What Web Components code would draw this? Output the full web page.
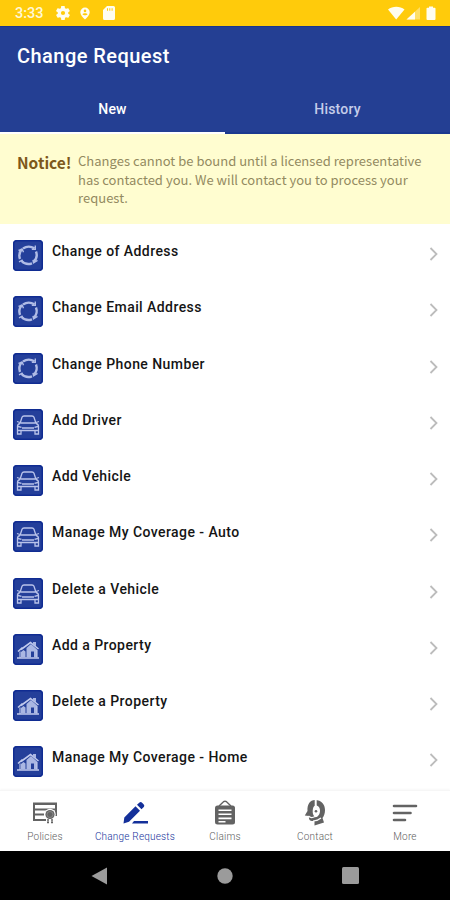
<!DOCTYPE html>
<html lang="en">
<head>
<meta charset="utf-8">
<title>Change Request</title>
<style>
  body {
    margin: 0;
    background: #fff;
    font-family: Roboto, "Liberation Sans", sans-serif;
  }
</style>
</head>
<body>

<template id="statusTemplate">
  <style>
    :host {
      display: flex;
      align-items: center;
      height: 26px;
      padding: 0 13px 0 15px;
      box-sizing: border-box;
      background: #ffcb0b;
      color: #fff8d8;
      font-size: 14.500px;
      font-weight: 500;
    }
    svg { display: block; fill: #fffdf0; }
    .time { width: 41px; padding-top: 1px; }
    .left { display: flex; gap: 10px; flex: 1; align-items: center; }
    .right { display: flex; align-items: center; }
  </style>
  <span class="time"><slot></slot></span>
  <span class="left">
    <svg width="14" height="14" viewBox="2 2 20 20"><path d="M19.400 13c.1-.7.1-1.300 0-2l2.100-1.600c.2-.2.2-.4.100-.6l-2-3.500c-.1-.2-.4-.3-.6-.2l-2.500 1c-.5-.4-1.100-.7-1.700-1l-.4-2.600c0-.3-.2-.5-.5-.5h-4c-.2 0-.4.200-.5.400l-.4 2.700c-.6.300-1.200.600-1.700 1l-2.500-1c-.2-.1-.5 0-.6.200l-2 3.500c-.1.200-.1.500.1.600L4.500 11v2l-2.100 1.600c-.2.200-.2.400-.1.600l2 3.500c.1.200.4.300.6.200l2.500-1c.5.400 1.100.7 1.700 1l.4 2.600c0 .3.200.5.500.5h4c.3 0 .5-.2.500-.5l.4-2.600c.6-.3 1.200-.6 1.700-1l2.500 1c.2.100.5 0 .6-.2l2-3.500c.1-.2.100-.4-.1-.6zM12 15a3 3 0 1 1 0-6 3 3 0 0 1 0 6z"/></svg>
    <svg width="10" height="13" viewBox="0 0 10 13"><path fill-rule="evenodd" d="M5 .5a4.700 4.700 0 0 1 4.700 4.700C9.700 8 7 10.500 5 12.500 3 10.500.3 8 .3 5.200A4.700 4.700 0 0 1 5 .5zM5 2.600a1.300 1.300 0 1 0 0 2.600 1.300 1.300 0 0 0 0-2.600zM2.500 7.200c.8 1.400 4.200 1.400 5 0C6.800 5.900 3.200 5.900 2.500 7.200z"/></svg>
    <svg width="16" height="14" viewBox="-3 0 16 14"><path fill-rule="evenodd" d="M4 0h6.500A1.500 1.500 0 0 1 12 1.500v11a1.500 1.500 0 0 1-1.500 1.500h-9A1.500 1.500 0 0 1 0 12.500V4zM4 2.300v2.400h1V2.300zm2.300 0v2.400h1V2.300zm2.300 0v2.400h1V2.300z"/></svg>
  </span>
  <span class="right">
    <svg width="49" height="15" viewBox="0 0 49 15">
      <path d="M0 3.500C4.500-.1 12-.1 16.500 3.500L8.200 13.500z"/>
      <path opacity=".4" d="M32 1v12.500H18.500z"/>
      <path d="M27 5.700v7.800h-8.500z"/>
      <path d="M41 1.700V.5h4v1.200h1.600a.9.9 0 0 1 .9.900v10.500a.9.9 0 0 1-.9.900h-7.200a.9.9 0 0 1-.9-.9V2.600a.9.9 0 0 1 .9-.9z"/>
    </svg>
  </span>
</template>

<template id="headerTemplate">
  <style>
    :host {
      display: flex;
      flex-direction: column;
      height: 108px;
      box-sizing: border-box;
      background: #243f93;
      border-top: 1px solid #19368c;
      color: #fff;
    }
    h1 {
      margin: 0;
      padding: 16px 17px 0;
      height: 43px;
      box-sizing: border-box;
      font-size: 20px;
      line-height: 26px;
      font-weight: 500;
      letter-spacing: 0.450px;
    }
    nav { display: flex; flex: 1; }
  </style>
  <h1><slot name="title"></slot></h1>
  <nav><slot></slot></nav>
</template>

<template id="tabTemplate">
  <style>
    :host {
      flex: 1;
      display: flex;
      align-items: center;
      justify-content: center;
      box-sizing: border-box;
      padding-top: 16px;
      font-size: 14px;
      font-weight: 500;
      letter-spacing: 0.200px;
      color: #c5cdea;
      border-bottom: 2px solid #1c398f;
    }
    :host([active]) {
      color: #fff;
      border-bottom-color: #fff;
    }
  </style>
  <slot></slot>
</template>

<template id="noticeTemplate">
  <style>
    :host {
      display: flex;
      height: 90px;
      box-sizing: border-box;
      padding: 18px 17px 0;
      background: #fffdd0;
      font-family: "Noto Sans CJK SC", "Noto Sans", sans-serif;
      color: #938a60;
    }
    strong {
      flex: none;
      width: 61px;
      font-size: 15.500px;
      line-height: 21px;
      font-weight: 700;
      color: #7d581b;
      white-space: nowrap;
    }
    p {
      margin: 0;
      font-size: 13px;
      line-height: 18.500px;
      letter-spacing: 0.020px;
      white-space: nowrap;
    }
  </style>
  <strong><slot name="label"></slot></strong>
  <p><slot></slot></p>
</template>

<template id="rowTemplate">
  <style>
    :host {
      display: flex;
      height: 56.250px;
      box-sizing: border-box;
      padding: 16px 11px 0 13px;
      color: #151515;
    }
    .tile {
      width: 30px;
      height: 31px;
      border-radius: 4px;
      background: #243f9a;
      box-shadow: inset 0 0 0 1.500px #102c92;
    }
    .tile svg { display: block; width: 30px; height: 31px; }
    .label {
      flex: 1;
      padding-left: 9px;
      font-size: 14px;
      line-height: 22px;
      font-weight: 500;
      letter-spacing: 0.430px;
    }
    .chevron { margin-top: 6px; width: 10px; height: 16px; }
  </style>
  <span class="tile"></span>
  <span class="label"><slot></slot></span>
  <svg class="chevron" viewBox="0 0 10 16" fill="none" stroke="#bcbcbc" stroke-width="1.800"><path d="M1.500 2l6 6-6 6"/></svg>
</template>

<template id="navItemTemplate">
  <style>
    :host {
      flex: 1;
      display: flex;
      flex-direction: column;
      align-items: center;
      color: #636363;
    }
    :host([active]) { color: #14309a; }
    .icon svg { display: block; width: 28px; height: 28px; }
    .label {
      margin-top: 3px;
      font-size: 10px;
      line-height: 14px;
      font-weight: 300;
      color: #606060;
      letter-spacing: 0.200px;
      white-space: nowrap;
    }
    :host([active]) .label { color: #14309a; }
  </style>
  <span class="icon"></span>
  <span class="label"><slot></slot></span>
</template>

<template id="systemTemplate">
  <style>
    :host {
      display: flex;
      justify-content: space-between;
      align-items: center;
      height: 49px;
      box-sizing: border-box;
      padding: 0 91px 0 91px;
      background: #000;
    }
    svg { display: block; fill: #9b9b9b; }
  </style>
  <svg width="17" height="18" viewBox="0 0 17 18"><path d="M16 .5v17L.5 9z"/></svg>
  <svg width="16" height="16" viewBox="0 0 16 16"><circle cx="8" cy="8" r="7.700"/></svg>
  <svg width="17" height="17" viewBox="0 0 17 17"><rect width="17" height="17" rx="1.500"/></svg>
</template>

<template id="appTemplate">
  <style>
    :host {
      display: flex;
      flex-direction: column;
      width: 450px;
      height: 900px;
      overflow: hidden;
      background: #fff;
    }
    .list { flex: 1; min-height: 0; overflow: hidden; }
    .bottom {
      display: flex;
      height: 61px;
      box-sizing: border-box;
      padding-top: 8px;
      border-top: 1px solid #f6f6f6;
      box-shadow: 0 -1px 2px #f8f8f8;
      background: #fff;
    }
  </style>
  <slot name="top"></slot>
  <div class="list"><slot></slot></div>
  <div class="bottom"><slot name="nav"></slot></div>
  <slot name="system"></slot>
</template>

<request-app>
  <status-bar slot="top">3:33</status-bar>
  <page-header slot="top">
    <span slot="title">Change Request</span>
    <page-tab active>New</page-tab>
    <page-tab>History</page-tab>
  </page-header>
  <notice-box slot="top">
    <span slot="label">Notice!</span>
    Changes cannot be bound until a licensed representative<br>has contacted you. We will contact you to process your<br>request.
  </notice-box>

  <request-row icon="change">Change of Address</request-row>
  <request-row icon="change">Change Email Address</request-row>
  <request-row icon="change">Change Phone Number</request-row>
  <request-row icon="car">Add Driver</request-row>
  <request-row icon="car">Add Vehicle</request-row>
  <request-row icon="car">Manage My Coverage - Auto</request-row>
  <request-row icon="car">Delete a Vehicle</request-row>
  <request-row icon="home">Add a Property</request-row>
  <request-row icon="home">Delete a Property</request-row>
  <request-row icon="home">Manage My Coverage - Home</request-row>

  <nav-item slot="nav" icon="policies">Policies</nav-item>
  <nav-item slot="nav" icon="edit" active>Change Requests</nav-item>
  <nav-item slot="nav" icon="claims">Claims</nav-item>
  <nav-item slot="nav" icon="contact">Contact</nav-item>
  <nav-item slot="nav" icon="more">More</nav-item>

  <system-bar slot="system"></system-bar>
</request-app>

<script>
  (() => {
    const rowIcons = {
      change: `<svg viewBox="0 0 30 31" fill="none" stroke="#b0bce6" stroke-width="2.400">
        <path d="M10 8.500Q15.500 4.800 21.500 8.300"/>
        <path d="M23 11.500q2.300 6-2.500 10.500"/>
        <path d="M19 23.300q-6 2.300-10.500-2.300"/>
        <path d="M7 19q-2-5.500 2-10"/>
        <path stroke-width="1.400" d="M22.300 5.500v3.800h-3.500M24.500 20.300l-4 2.500-.5-3M6 21.800l3-1.500 1.500 3M5.500 10.500l3.700-1.300 1.300 3"/></svg>`,
      car: `<svg viewBox="0 0 30 31" fill="none" stroke="#b9c3ea" stroke-width="1.300">
        <path d="M7 14.500L9 8.300q.5-1.300 2-1.300h8q1.500 0 2 1.300l2 6.200M7.500 14h15M4 12.500l3 1M26 12.500l-3 1M7 14.500q-2.500.5-2.500 3V25h3.500v-3.500h14V25h3.500v-7.500q0-2.500-2.500-3M9 19h12M9 21.500h12M4.500 21.500h4M21.500 21.500h4"/>
        <path d="M5 17.500l3.500.8M25 17.500l-3.500.8"/></svg>`,
      home: `<svg viewBox="0 0 30 31" fill="none" stroke="#c1caed" stroke-width="1.600">
        <path d="M5 17.500l4.500-4M8 15.500L17.500 8.500 25.500 15M4 24h22"/>
        <path fill="#aab7e3" stroke="none" d="M13.500 14l4.500-4 6 5.500v8h-3V17.500h-3v6h-4.500zM8 18l2.500-2 2 1.500v6H8zM20 8h3v4.500l-3-2.500z"/>
        <path stroke-width="1.100" d="M7 24v-6.500M24 23.500V16"/></svg>`
    };

    const navIcons = {
      policies: `<svg viewBox="0 0 28 28">
        <path fill="none" stroke="currentColor" stroke-width="2" d="M15 21H3V4.500h22V17"/>
        <path stroke="currentColor" stroke-width="2" d="M3 5h22M4 10.500h20M4 15.500h9"/>
        <circle cx="19" cy="15.500" r="5.700" fill="#fff"/>
        <circle cx="19" cy="15.500" r="4.600" fill="currentColor"/>
        <circle cx="19" cy="15.500" r="3" fill="none" stroke="#aaa" stroke-width=".5"/>
        <path fill="none" stroke="currentColor" stroke-width="1.500" d="M17 20v2.500M21 20v2.500M16 23.500h2M20 23.500h2"/></svg>`,
      edit: `<svg viewBox="0 0 28 28" fill="currentColor">
        <path d="M2.500 24.500l.8-6L14.500 7.300l4.500 4.500L8 22.800l-5.500 1.700zM16 5.800l2.500-2.300q1.400-1 2.800.4l1.300 1.300q1.400 1.500.2 2.800L20.500 10.300z"/>
        <path d="M13 22h14v2.400H11z"/></svg>`,
      claims: `<svg viewBox="0 0 28 28">
        <path fill="none" stroke="currentColor" stroke-width="1.400" d="M8 7l4.500-4.300q1.500-1 3 0L20 7"/>
        <rect x="4" y="6.500" width="20" height="19" rx="2.500" fill="currentColor"/>
        <path stroke="#fff" stroke-width="1.600" d="M7.500 11.200h13M7.500 15.300h13M7.500 19.400h13M7.500 22.700h7"/></svg>`,
      contact: `<svg viewBox="0 0 28 28">
        <path fill="currentColor" d="M14 1c6.500 0 10 4.500 10 10 0 3.500-1 6-2.500 8l1.500 4.500-9.500 3V22c-4 .5-6-.5-5.500-5L3.800 16.500 6.500 12C6 5.500 9 1 14 1z"/>
        <path fill="none" stroke="#fff" stroke-width="2" d="M14.700 1v7"/>
        <path fill="#fff" d="M14.700 6.500c3 0 4.500 2.500 4.300 5.500-.2 3.500-2 6-4.500 6.300-2-1-3-3.500-2.800-6.500.2-3 1-5.300 3-5.300z"/>
        <circle cx="15" cy="12.300" r="1.300" fill="currentColor"/>
        <path stroke="#fff" stroke-width="1.200" d="M7.500 17q2.500 2.800 6.500.5M12 22q5-.3 8-3" fill="none"/></svg>`,
      more: `<svg viewBox="0 0 28 28" fill="none" stroke="currentColor" stroke-width="2.600" stroke-linecap="round">
        <path d="M3 7h22M3 14h16.500M3 21h11"/></svg>`
    };

    class BaseElement extends HTMLElement {
      constructor(templateId) {
        super();
        this.root = this.attachShadow({mode: 'open'});
        this.root.appendChild(document.getElementById(templateId).content.cloneNode(true));
      }
    }

    // elements that only need their template
    const simple = {
      'request-app': 'appTemplate',
      'status-bar': 'statusTemplate',
      'page-header': 'headerTemplate',
      'page-tab': 'tabTemplate',
      'notice-box': 'noticeTemplate',
      'system-bar': 'systemTemplate'
    };
    Object.keys(simple).forEach(name => {
      customElements.define(name, class extends BaseElement {
        constructor() {
          super(simple[name]);
        }
      });
    });

    customElements.define('request-row', class extends BaseElement {
      constructor() {
        super('rowTemplate');
      }
      connectedCallback() {
        this.root.querySelector('.tile').innerHTML = rowIcons[this.getAttribute('icon')] || '';
      }
    });

    customElements.define('nav-item', class extends BaseElement {
      constructor() {
        super('navItemTemplate');
      }
      connectedCallback() {
        this.root.querySelector('.icon').innerHTML = navIcons[this.getAttribute('icon')] || '';
      }
    });
  })();
</script>
</body>
</html>
